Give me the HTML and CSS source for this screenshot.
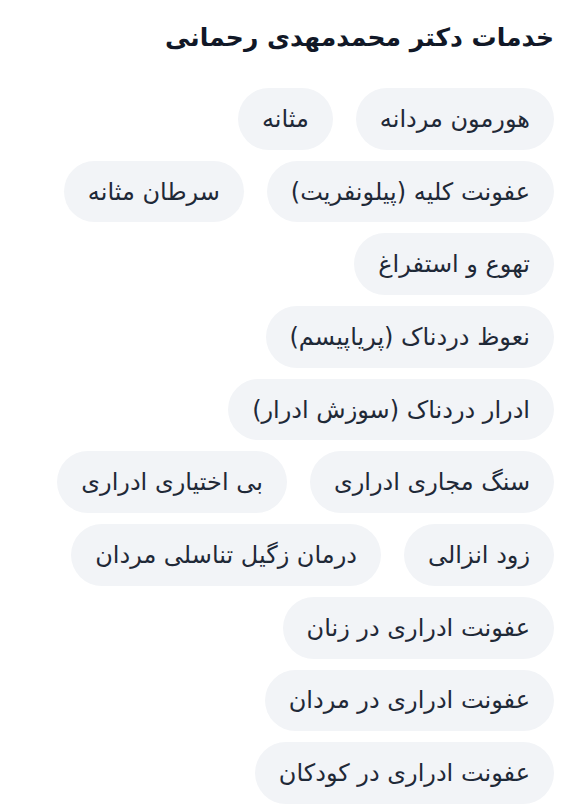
FILE: index.html
```html
<!DOCTYPE html>
<html lang="fa" dir="rtl">
<head>
<meta charset="utf-8">
<title>خدمات دکتر محمدمهدی رحمانی</title>
<link rel="stylesheet" href="styles.css">
</head>
<body>
<section class="services">
  <h2 class="services-title">خدمات دکتر محمدمهدی رحمانی</h2>
  <ul class="tags">
    <li class="tag">هورمون مردانه</li>
    <li class="tag">مثانه</li>
    <li class="tag">عفونت کلیه (پیلونفریت)</li>
    <li class="tag">سرطان مثانه</li>
    <li class="tag">تهوع و استفراغ</li>
    <li class="tag">نعوظ دردناک (پریاپیسم)</li>
    <li class="tag">ادرار دردناک (سوزش ادرار)</li>
    <li class="tag">سنگ مجاری ادراری</li>
    <li class="tag">بی اختیاری ادراری</li>
    <li class="tag">زود انزالی</li>
    <li class="tag">درمان زگیل تناسلی مردان</li>
    <li class="tag">عفونت ادراری در زنان</li>
    <li class="tag">عفونت ادراری در مردان</li>
    <li class="tag">عفونت ادراری در کودکان</li>
  </ul>
</section>
</body>
</html>
```
FILE: styles.css
```css
html, body {
  margin: 0;
  padding: 0;
  background: #ffffff;
}
body {
  font-family: "DejaVu Sans", "Noto Sans Arabic", sans-serif;
  color: #1f2937;
}
.services {
  padding: 16px 17px 0 17px;
}
.services-title {
  margin: 0 0 28px 0;
  font-size: 25px;
  font-weight: 700;
  line-height: 44px;
  color: #111827;
}
.tags {
  list-style: none;
  margin: 0;
  padding: 0;
  display: flex;
  flex-wrap: wrap;
  gap: 11px 23px;
  max-width: 505px;
}
.tag {
  background: #f2f4f7;
  border-radius: 999px;
  height: 61.7px;
  padding: 0 24px;
  display: flex;
  align-items: center;
  font-size: 24px;
  color: #1f2937;
  white-space: nowrap;
}
```
